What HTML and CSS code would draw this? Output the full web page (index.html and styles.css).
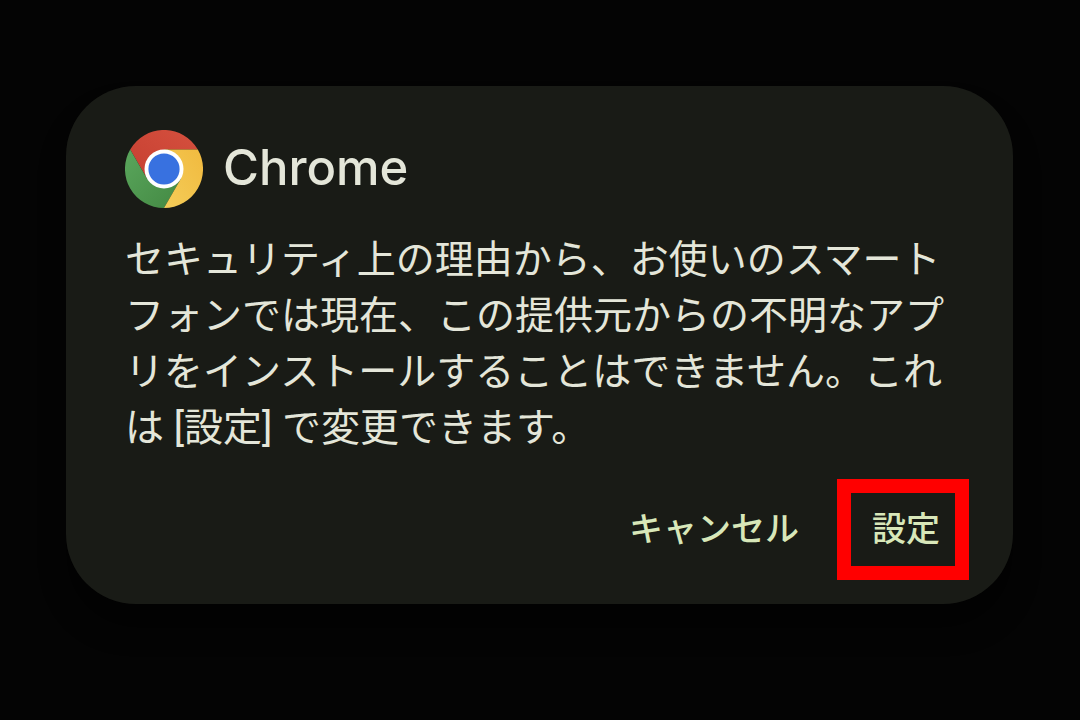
FILE: index.html
```
<!DOCTYPE html>
<html lang="ja">
<head>
<meta charset="utf-8">
<meta name="viewport" content="width=device-width, initial-scale=1">
<title>Chrome</title>
<link rel="stylesheet" href="styles.css">
</head>
<body>
<main class="dialog" role="dialog" aria-labelledby="title" aria-describedby="message">
  <header class="dialog-header">
    <svg class="logo" viewBox="0 0 78 78" aria-hidden="true">
      <defs>
        <linearGradient id="red" x1="0" y1="1" x2="1" y2="0"><stop offset="0" stop-color="#c63f31"/><stop offset="1" stop-color="#d5503e"/></linearGradient>
        <linearGradient id="green" x1="0" y1="0" x2="1" y2="1"><stop offset="0" stop-color="#5aa65c"/><stop offset="1" stop-color="#438943"/></linearGradient>
        <linearGradient id="yellow" x1="0" y1="1" x2="1" y2="0"><stop offset="0" stop-color="#f4cd59"/><stop offset="1" stop-color="#f1ba3f"/></linearGradient>
      </defs>
      <path fill="url(#red)" d="M5.2 19.5A39 39 0 0 1 72.8 19.5H39L22.1 48.8Z"/>
      <path fill="url(#green)" d="M5.2 19.5A39 39 0 0 0 39 78L55.9 48.8L39 39L22.1 48.8Z"/>
      <path fill="url(#yellow)" d="M72.8 19.5A39 39 0 0 1 39 78L55.9 48.8L39 19.5Z"/>
      <circle cx="39" cy="39" r="19.5" fill="#fff"/>
      <circle cx="39" cy="39" r="15.6" fill="#3871e0"/>
    </svg>
    <h1 class="title" id="title">Chrome</h1>
  </header>
  <p class="message" id="message">セキュリティ上の理由から、お使いのスマートフォンでは現在、この提供元からの不明なアプリをインストールすることはできません。これは [設定] で変更できます。</p>
  <footer class="actions">
    <button class="action" type="button">キャンセル</button>
    <button class="action action-marked" type="button">設定</button>
  </footer>
</main>
</body>
</html>
```
FILE: styles.css
```
* {
  box-sizing: border-box;
}

body {
  margin: 0;
  min-height: 100vh;
  padding: 85px 67px 116px 66px;
  display: flex;
  align-items: center;
  background: #040404;
  color: #e4e6d9;
  font-family: Roboto, "Noto Sans CJK JP", sans-serif;
}

.dialog {
  flex: 1;
  padding: 44px 44px 24px 59px;
  border-radius: 70px;
  background: #191b16;
  box-shadow: 0 24px 24px rgb(0 0 0 / 50%);
}

.dialog-header {
  display: flex;
  align-items: center;
  gap: 20px;
}

.logo {
  width: 78px;
  height: 78px;
}

.title {
  margin: 0;
  padding-bottom: 2px;
  font-family: Inter, sans-serif;
  font-size: 49px;
  font-weight: 500;
  line-height: 60px;
}

.message {
  margin: 24px 24px 23px 0;
  font-size: 39px;
  line-height: 56px;
}

.actions {
  display: flex;
  justify-content: flex-end;
  gap: 16px;
}

.action {
  padding: 0 22px 1px;
  border: 0;
  background: none;
  color: #d8e7b9;
  font: inherit;
  font-size: 34px;
  font-weight: 500;
  line-height: 72px;
}

.action-marked {
  padding: 0 15px 1px 21px;
  border: 14px solid #f00;
}
```
